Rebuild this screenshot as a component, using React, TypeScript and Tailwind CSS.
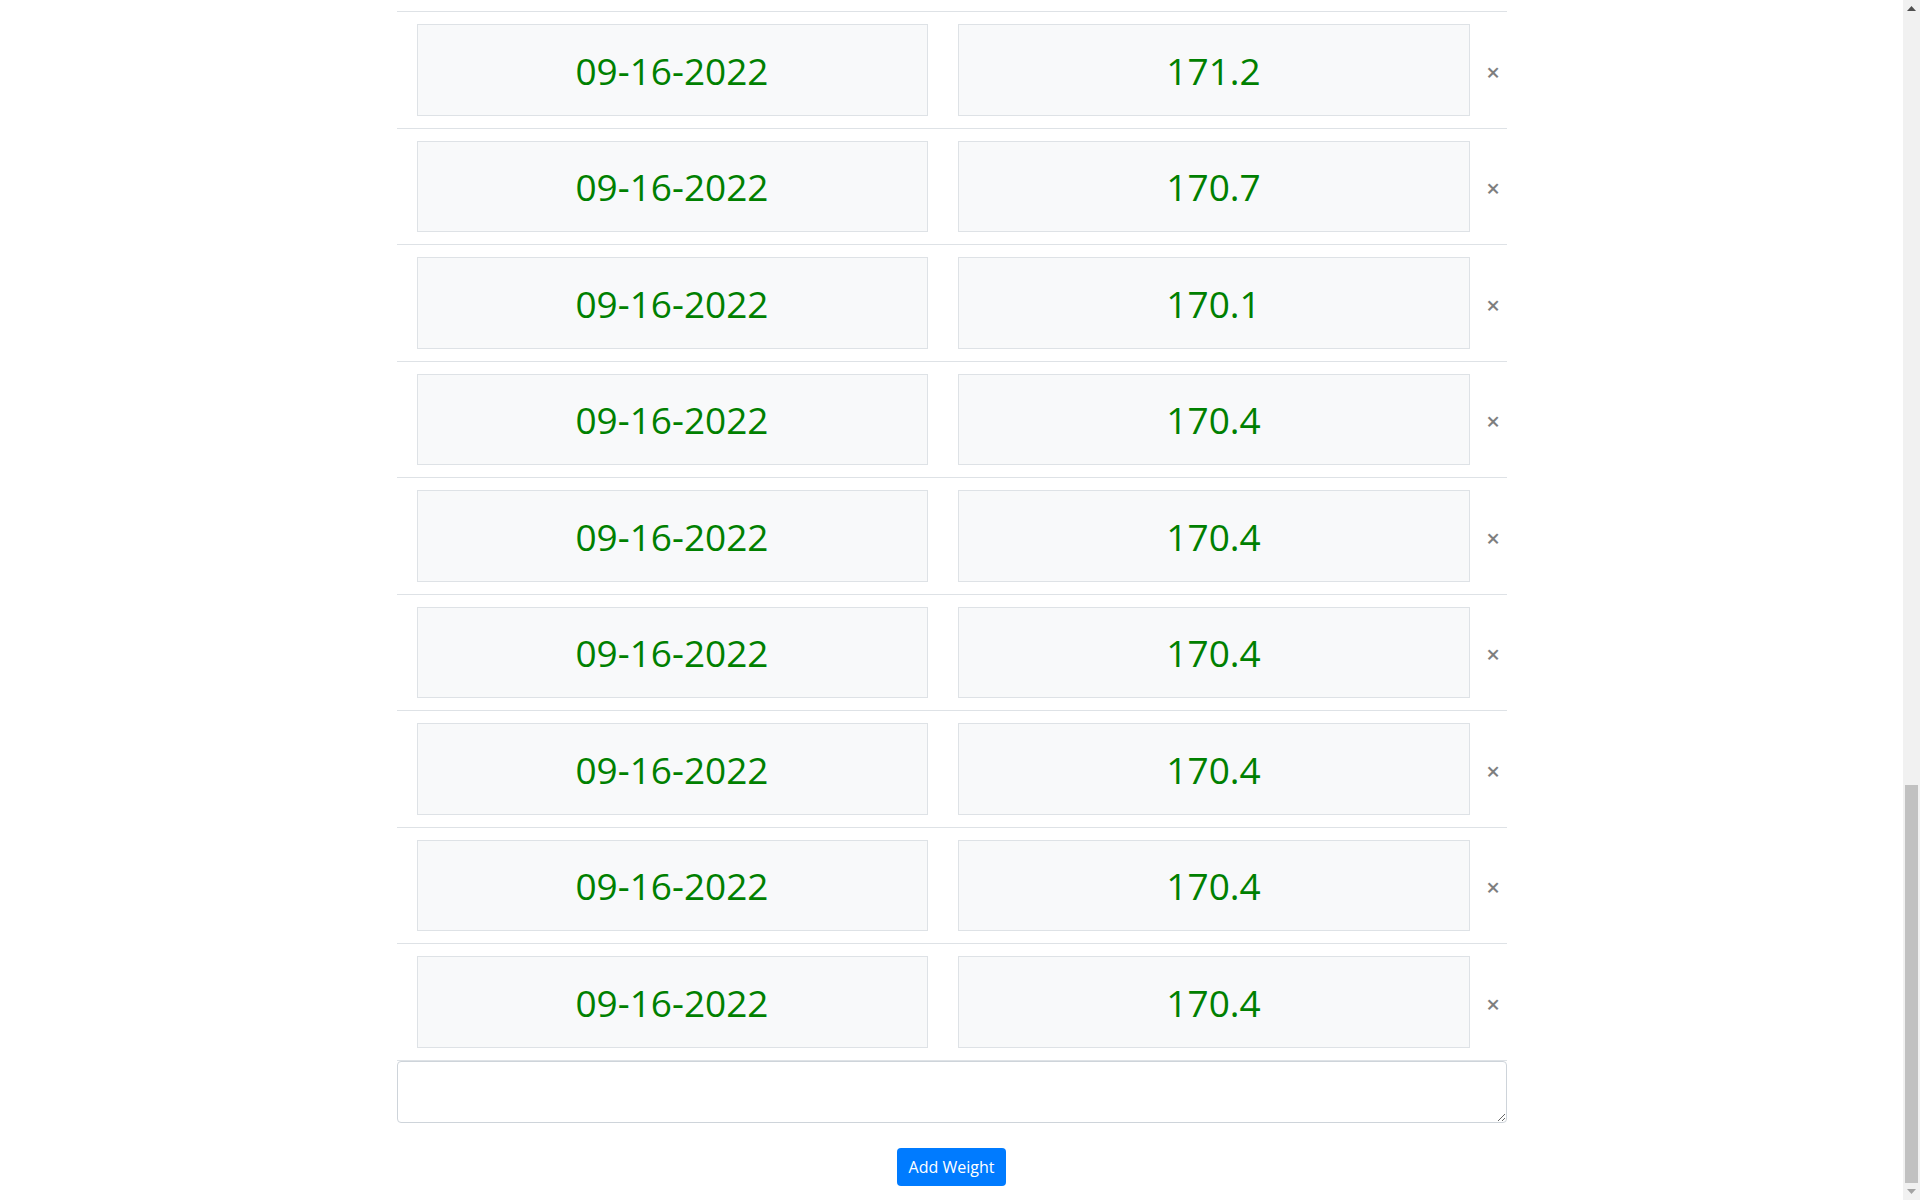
import React from 'react';

type Entry = { date: string; weight: string };

const entries: Entry[] = [
  { date: '09-16-2022', weight: '171.2' },
  { date: '09-16-2022', weight: '170.7' },
  { date: '09-16-2022', weight: '170.1' },
  { date: '09-16-2022', weight: '170.4' },
  { date: '09-16-2022', weight: '170.4' },
  { date: '09-16-2022', weight: '170.4' },
  { date: '09-16-2022', weight: '170.4' },
  { date: '09-16-2022', weight: '170.4' },
  { date: '09-16-2022', weight: '170.4' },
];

const WeightRow: React.FC<{ entry: Entry; last: boolean }> = ({ entry, last }) => (
  <li className={`flex items-center border-t border-[#dee2e6] pl-5 py-3 ${last ? 'border-b' : ''}`}>
    <div className="w-[511px] h-[91.5px] pt-[1px] flex items-center justify-center bg-[#f8f9fa] border border-[#dee2e6] text-[#008000] text-[37px]">
      {entry.date}
    </div>
    <div className="ml-[30px] w-[512px] h-[91.5px] pt-[1px] flex items-center justify-center bg-[#f8f9fa] border border-[#dee2e6] text-[#008000] text-[37px]">
      {entry.weight}
    </div>
    <button className="flex-1 flex items-center justify-center pl-[10px] pt-[4px] text-[24px] font-semibold leading-none text-black opacity-50">
      ×
    </button>
  </li>
);

export default function App() {
  return (
    <div className="flex h-screen overflow-hidden bg-white font-['Open_Sans',sans-serif]">
      <main className="flex-1">
        <div className="w-[1140px] mx-auto px-[15px]">
          <div className="h-[11px]" />
          <ul>
            {entries.map((e, i) => (
              <WeightRow key={i} entry={e} last={i === entries.length - 1} />
            ))}
          </ul>
          <textarea
            rows={2}
            className="block w-full h-[62px] border border-[#ced4da] rounded-[4px] px-3 py-1.5 text-base"
          />
          <div className="flex justify-center mt-[25px]">
            <button className="h-[38px] px-3 rounded-[4px] bg-[#007bff] text-white text-base">
              Add Weight
            </button>
          </div>
        </div>
      </main>

      {/* scrollbar */}
      <div className="w-[17px] h-full bg-[#f1f1f1] flex flex-col items-center">
        <div className="h-[17px] flex items-center justify-center">
          <svg width="9" height="5" viewBox="0 0 9 5"><path d="M0 5 L4.5 0 L9 5 Z" fill="#505050" /></svg>
        </div>
        <div className="flex-1 w-full flex flex-col justify-end px-[2px]">
          <div className="h-[398px] w-full bg-[#c1c1c1]" />
        </div>
        <div className="h-[17px] flex items-center justify-center">
          <svg width="9" height="5" viewBox="0 0 9 5"><path d="M0 0 L9 0 L4.5 5 Z" fill="#a3a3a3" /></svg>
        </div>
      </div>
    </div>
  );
}
